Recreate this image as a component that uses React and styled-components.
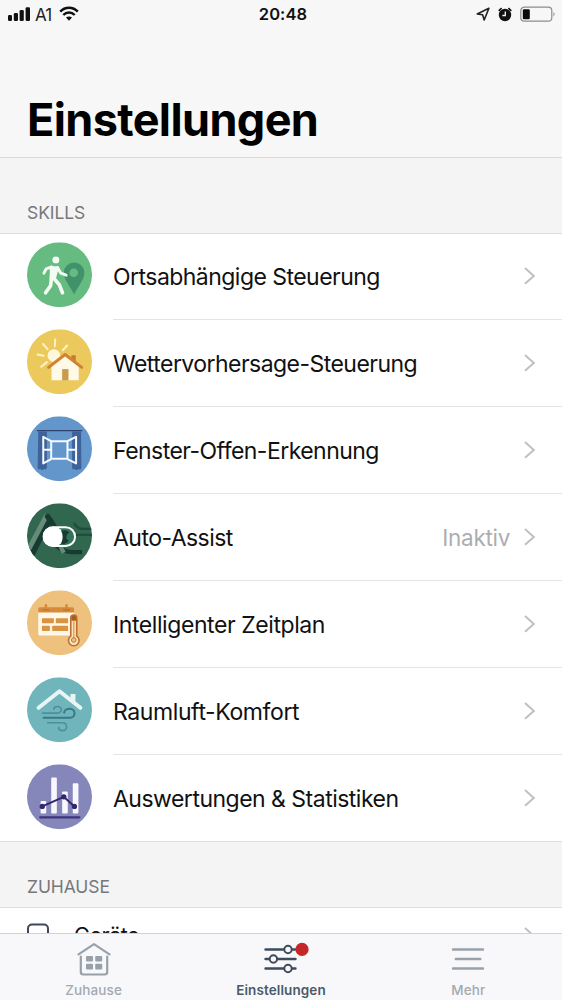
import React from 'react'
import styled, { createGlobalStyle } from 'styled-components'

const GlobalStyle = createGlobalStyle`
  * {
    box-sizing: border-box;
  }
  body {
    margin: 0;
    background: #f4f4f5;
    font-family: Inter, "Liberation Sans", sans-serif;
  }
`

const Screen = styled.div`
  display: flex;
  flex-direction: column;
  width: 562px;
  height: 1000px;
  overflow: hidden;
  background: #f4f4f5;
`
const Header = styled.header`
  flex: none;
  height: 158px;
  background: #f7f7f7;
  border-bottom: 1px solid #d9d9db;
`
const StatusBar = styled.div`
  display: grid;
  grid-template-columns: 1fr auto 1fr;
  align-items: center;
  height: 28px;
  padding: 0 6px 0 7px;
`
const StatusGroup = styled.div`
  display: flex;
  align-items: center;
  gap: ${({ $gap }) => $gap || 0}px;
  justify-content: ${({ $end }) => ($end ? 'flex-end' : 'flex-start')};
`
const Carrier = styled.span`
  margin: 1px 8px 0 4px;
  font-size: 17px;
  letter-spacing: -0.8px;
  color: #222;
`
const Clock = styled.span`
  margin: 0 0 0 3px;
  font-size: 16.5px;
  font-weight: 600;
  letter-spacing: 0.1px;
  color: #111;
`
const Title = styled.h1`
  margin: 65px 0 0 27px;
  font-size: 45px;
  line-height: 54px;
  font-weight: 700;
  letter-spacing: -0.62px;
  color: #000;
`
const Content = styled.main`
  flex: 1;
  min-height: 0;
  overflow: hidden;
`
const SectionLabel = styled.h2`
  display: flex;
  align-items: flex-end;
  height: ${({ $height }) => $height}px;
  margin: 0;
  padding: 0 27px 9px;
  font-size: 17.5px;
  line-height: 22px;
  font-weight: 400;
  letter-spacing: -0.1px;
  color: #77777b;
`
const List = styled.div`
  background: #fff;
  border-bottom: 1px solid #dddddf;
`
const Row = styled.div`
  display: flex;
  height: 87px;
  padding-left: 27px;

  &:first-child {
    border-top: 1px solid #dddddf;
  }
  &:first-child > * {
    margin-top: -1px;
  }
  &:last-child {
    height: 86px;
  }
`
const SkillIcon = styled.svg`
  flex: none;
  width: 65px;
  height: 65px;
  margin-right: 21px;
  transform: translateY(9.3px);
`
const RowBody = styled.div`
  flex: 1;
  display: flex;
  align-items: center;
  border-bottom: ${({ $last }) => ($last ? 'none' : '1px solid #e4e4e6')};
  padding: 0 26px 0 0;
`
const RowLabel = styled.span`
  flex: 1;
  padding-top: 1px;
  font-size: 23px;
  letter-spacing: ${({ $spacing }) => $spacing || -0.54}px;
  color: #111;
`
const RowValue = styled.span`
  margin-right: 14px;
  font-size: 22.5px;
  letter-spacing: -0.3px;
  padding-top: 1px;
  color: #adadb0;
`
const DeviceRow = styled.div`
  display: flex;
  height: 60px;
  padding: 15px 26px 0 27px;
  border-top: 1px solid #dddddf;

  > svg:last-child {
    margin-top: 3px;
  }
`
const DeviceLabel = styled.span`
  flex: 1;
  margin: -3px 0 0 25px;
  font-size: 21.5px;
  line-height: 30px;
  letter-spacing: -0.5px;
  color: #111;
`
const TabBar = styled.nav`
  flex: none;
  display: grid;
  grid-template-columns: repeat(3, 1fr);
  height: 67px;
  background: #f8f8fa;
  border-top: 1px solid #d3d3d6;
`
const Tab = styled.div`
  display: flex;
  flex-direction: column;
  align-items: center;
  padding-top: 6px;
  font-size: 13.5px;
  line-height: 18px;
  font-weight: ${({ $active }) => ($active ? 600 : 500)};
  letter-spacing: 0.1px;
  color: ${({ $active }) => ($active ? '#4a5868' : '#a3a9b0')};

  svg {
    margin-bottom: 5px;
  }
`

const Chevron = () => (
  <svg width="12" height="20" viewBox="0 0 12 20" fill="none" stroke="#c0c0c4" strokeWidth="2">
    <path d="M1 2 L9.8 9.9 L1 17.8" />
  </svg>
)

/* the round icons share one 196 unit canvas, the circle centre is 134,118 */
function Round({ color, id, children }) {
  return (
    <SkillIcon viewBox="36 20 196 196">
      <defs>
        <clipPath id={id}>
          <circle cx="134" cy="118" r="98" />
        </clipPath>
      </defs>
      <circle cx="134" cy="118" r="98" fill={color} />
      <g clipPath={`url(#${id})`}>{children}</g>
    </SkillIcon>
  )
}

const WalkIcon = () => (
  <Round color="#66bb80" id="walk">
    <path d="M178 178 C168 154 147 134 147 112 A31 31 0 0 1 209 112 C209 134 188 154 178 178 Z" fill="#41916a" />
    <circle cx="177" cy="112" r="13" fill="#66bb80" />
    <g fill="none" stroke="#f4fbf2" strokeLinecap="round" strokeLinejoin="round">
      <circle cx="123" cy="73" r="10.5" fill="#f4fbf2" stroke="none" />
      <path d="M109 96 L128 96 L119 130 L108 130 Z" fill="#f4fbf2" strokeWidth="8" />
      <path d="M110 94 L94 100 L87 113" strokeWidth="9" />
      <path d="M128 96 L138 113 L154 119" strokeWidth="9" />
      <path d="M110 128 L107 151 L92 172" strokeWidth="11" />
      <path d="M117 129 L133 147 L143 172" strokeWidth="11" />
    </g>
  </Round>
)

const WeatherIcon = () => (
  <Round color="#ecc95c" id="weather">
    <circle cx="117" cy="99" r="19" fill="#fff7dc" />
    <g stroke="#fff3c4" strokeWidth="6" strokeLinecap="round">
      <path d="M68 96 L86 100" />
      <path d="M84 64 L98 80" />
      <path d="M121 51 L120 71" />
      <path d="M157 69 L144 83" />
      <path d="M79 133 L96 119" />
    </g>
    <path d="M170 98 L183 98 L183 122 L170 112 Z" fill="#c77a2c" />
    <path d="M110 174 L110 130 L151 97 L192 130 L192 174 Z" fill="#fff9e8" />
    <path d="M101 135 L151 96 L201 135" fill="none" stroke="#d08334" strokeWidth="9" strokeLinecap="round" strokeLinejoin="round" />
    <rect x="142" y="140" width="19" height="34" fill="#c99b4a" />
  </Round>
)

const WindowIcon = () => (
  <Round color="#6397cc" id="window">
    <path d="M70 66 L96 66 L96 172 C96 180 90 182 88 178 C84 184 78 182 76 178 C72 182 68 180 68 174 Z" fill="#3e639b" />
    <path d="M172 66 L199 66 L200 174 C200 182 194 182 191 178 C188 184 182 182 180 178 C176 182 172 180 172 174 Z" fill="#3e639b" />
    <path d="M66 63 L203 63" stroke="#2e426c" strokeWidth="4" />
    <g fill="none" stroke="#f5faff" strokeWidth="6" strokeLinejoin="round">
      <rect x="109" y="95" width="49" height="53" />
      <path d="M109 95 L85 82 L85 162 L109 149" />
      <path d="M158 95 L184 82 L184 162 L158 149" />
      <path d="M85 121 L109 121 M158 121 L184 121" />
    </g>
  </Round>
)

const AssistIcon = () => (
  <Round color="#31664f" id="assist">
    <path d="M48 178 L101 72" stroke="#173a32" strokeWidth="19" />
    <path d="M43 155 L93 60" stroke="#648c78" strokeWidth="15" strokeLinecap="round" />
    <path d="M98 60 C103 66 116 84 132 120" fill="none" stroke="#173a32" strokeWidth="16" strokeLinecap="round" />
    <path d="M123 146 C138 160 153 167 170 167 L202 167" fill="none" stroke="#173a32" strokeWidth="13" />
    <path d="M137 151 L147 169" stroke="#648c78" strokeWidth="13" />
    <path d="M178 78 C182 91 192 96 204 97 L232 97 M184 115 L232 115" fill="none" stroke="#204d3f" strokeWidth="7" />
    <rect x="86" y="92" width="95" height="57" rx="28.5" fill="#35735a" stroke="#fff" strokeWidth="6" />
    <rect x="84" y="90" width="62" height="61" rx="30" fill="#fff" />
    <path d="M139 103 C145 114 145 129 139 141 C147 145 157 140 162 132 C151 130 153 112 164 108 C158 101 149 99 139 103 Z" fill="#173a32" />
  </Round>
)

const PlanIcon = () => (
  <Round color="#efc17e" id="plan">
    <path d="M70 84 L178 84 L178 156 L74 156 Q70 156 70 150 Z" fill="#fff8e8" />
    <path d="M75 71 L173 71 Q178 71 178 76 L178 87 L70 87 L70 76 Q70 71 75 71 Z" fill="#d68b3b" />
    <path d="M93 65 L93 79 M155 65 L155 79" stroke="#d68b3b" strokeWidth="8" strokeLinecap="round" />
    <path d="M83 79 L103 79 M145 79 L165 79" stroke="#b96c25" strokeWidth="3" />
    <g fill="#d99443">
      <rect x="81" y="104" width="36" height="15" rx="2" />
      <rect x="123" y="104" width="37" height="15" rx="2" />
      <rect x="81" y="127" width="24" height="16" rx="2" />
      <rect x="112" y="127" width="48" height="16" rx="2" />
    </g>
    <path d="M168 104 A9 9 0 0 1 186 104 L186 158 A16 16 0 1 1 168 158 Z" fill="#ffe8be" stroke="#b97132" strokeWidth="5" />
    <path d="M170 103 A7 7 0 0 1 184 103 L184 112 L170 112 Z" fill="#a75d24" />
    <path d="M177 112 L177 165" stroke="#e3a863" strokeWidth="5" />
    <circle cx="177" cy="170" r="7" fill="#efc17e" stroke="#b97132" strokeWidth="3" />
  </Round>
)

const AirIcon = () => (
  <Round color="#70b5bc" id="air">
    <path d="M167 70 L182 70 L182 96 L167 84 Z" fill="#e9f5f5" />
    <path d="M71 112 L134 62 L197 112" fill="none" stroke="#e9f5f5" strokeWidth="12" strokeLinecap="round" strokeLinejoin="round" />
    <g fill="none" strokeWidth="5" strokeLinecap="round">
      <path d="M83 128 L127 128 C143 128 143 108 128 108 C121 108 117 111 117 116" stroke="#4e909a" />
      <path d="M86 142 L166 142 C184 142 184 115 165 115 C156 115 148 120 148 127" stroke="#397a84" strokeWidth="6" />
      <path d="M98 157 L143 157 C159 157 160 181 143 181 C134 181 131 176 132 171" stroke="#4e909a" />
    </g>
  </Round>
)

const StatsIcon = () => (
  <Round color="#8586ba" id="stats">
    <g fill="#f8f7ff">
      <rect x="77" y="131" width="17" height="37" rx="3" />
      <rect x="109" y="60" width="17" height="108" rx="3" />
      <rect x="142" y="102" width="17" height="66" rx="3" />
      <rect x="174" y="77" width="17" height="91" rx="3" />
    </g>
    <path d="M82 147 L147 118 L179 147" fill="none" stroke="#33276c" strokeWidth="6" />
    <circle cx="82" cy="147" r="8" fill="#33276c" />
    <circle cx="147" cy="118" r="8" fill="#33276c" />
    <circle cx="179" cy="147" r="8" fill="#33276c" />
    <path d="M76 180 L194 180" stroke="#3f347c" strokeWidth="7" strokeLinecap="round" />
  </Round>
)

const SignalIcon = () => (
  <svg width="24" height="16" viewBox="0 0 24 16" fill="#111">
    <rect x="1" y="9" width="4" height="6" rx="1.3" />
    <rect x="6.8" y="7" width="4.2" height="8" rx="1.3" />
    <rect x="12.6" y="4" width="4.2" height="11" rx="1.3" />
    <rect x="18.6" y="1.3" width="4.4" height="13.7" rx="1.3" />
  </svg>
)

const WifiIcon = () => (
  <svg width="20" height="16" viewBox="0 0 20 16" fill="none" stroke="#111" strokeWidth="2.5">
    <path d="M1.2 5.7 C6 0.5 14 0.5 18.8 5.7" />
    <path d="M4.3 9 C7.5 5.7 12.5 5.7 15.7 9" />
    <path d="M7 11.6 C8.7 10 11.3 10 13 11.6 L10 14.7 Z" fill="#111" stroke="none" />
  </svg>
)

const ArrowIcon = () => (
  <svg width="14" height="14" viewBox="0 0 14 14" fill="none" stroke="#222" strokeWidth="1.6" strokeLinejoin="round">
    <path d="M12.9 1.2 L1.2 7 L6.6 7.7 L8.2 13 Z" />
  </svg>
)

const AlarmIcon = () => (
  <svg width="14" height="15" viewBox="0 0 14 15">
    <circle cx="7" cy="8" r="6.2" fill="#111" />
    <path d="M0.7 3.8 L3.6 1.2 M13.3 3.8 L10.4 1.2" stroke="#111" strokeWidth="1.6" />
    <path d="M7.3 4.5 L7.3 8.5 L4.4 8.5" fill="none" stroke="#f7f7f7" strokeWidth="1.3" />
  </svg>
)

const BatteryIcon = () => (
  <svg width="36" height="17" viewBox="0 0 36 17">
    <rect x="0.8" y="1.2" width="31" height="14" rx="3.5" fill="none" stroke="#8d8d8d" strokeWidth="1.2" />
    <rect x="2.8" y="3.2" width="7" height="10" rx="1.2" fill="#0b0b0b" />
    <path d="M33.5 6 Q35.8 8.2 33.5 10.5 Z" fill="#8d8d8d" />
  </svg>
)

const HouseIcon = () => (
  <svg width="34" height="36" viewBox="0 0 34 36" fill="none" stroke="#98a0a9" strokeWidth="2.2" strokeLinecap="round" strokeLinejoin="round">
    <path d="M1.5 14.3 L17 4.2 L32.5 14.3" />
    <path d="M3.8 16.5 L3.8 32 Q3.8 34.5 6.5 34.5 L27.5 34.5 Q30.2 34.5 30.2 32 L30.2 16.5" />
    <g fill="#98a0a9" stroke="none">
      <rect x="9" y="16" width="7" height="5.6" rx="1" />
      <rect x="18.2" y="16" width="7" height="5.6" rx="1" />
      <rect x="9" y="23.8" width="7" height="5.6" rx="1" />
      <rect x="18.2" y="23.8" width="7" height="5.6" rx="1" />
    </g>
  </svg>
)

const SlidersIcon = () => (
  <svg width="34" height="36" viewBox="0 0 34 36" overflow="visible" fill="none" stroke="#3d4b5d" strokeWidth="2.4" strokeLinecap="round">
    <path d="M1.5 9.5 L31 9.5 M1.5 19 L31.5 19 M1.5 28.5 L31.5 28.5" />
    <g fill="#f8f8fa" strokeWidth="2">
      <circle cx="24" cy="9.5" r="3.7" />
      <circle cx="9.4" cy="19" r="3.7" />
      <circle cx="24" cy="28.5" r="3.7" />
    </g>
    <circle cx="38" cy="9.4" r="6.6" fill="#c32728" stroke="none" />
  </svg>
)

const MenuIcon = () => (
  <svg width="34" height="36" viewBox="0 0 34 36" fill="none" stroke="#98a0a9" strokeWidth="2.4" strokeLinecap="round">
    <path d="M2 9.5 L32 9.5 M4.8 19 L29.3 19 M2 28.5 L32 28.5" />
  </svg>
)

const DeviceIcon = () => (
  <svg width="22" height="30" viewBox="0 0 22 30" fill="none" stroke="#3d4858" strokeWidth="2">
    <rect x="1" y="1.5" width="20" height="27" rx="4" />
  </svg>
)

const skills = [
  { label: 'Ortsabhängige Steuerung', Icon: WalkIcon },
  { label: 'Wettervorhersage-Steuerung', Icon: WeatherIcon },
  { label: 'Fenster-Offen-Erkennung', Icon: WindowIcon },
  { label: 'Auto-Assist', Icon: AssistIcon, value: 'Inaktiv' },
  { label: 'Intelligenter Zeitplan', Icon: PlanIcon, spacing: -0.42 },
  { label: 'Raumluft-Komfort', Icon: AirIcon, spacing: -0.4 },
  { label: 'Auswertungen & Statistiken', Icon: StatsIcon, spacing: -0.51 }
]

function App() {
  return (
    <>
      <GlobalStyle />
      <Screen>
        <Header>
          <StatusBar>
            <StatusGroup>
              <SignalIcon />
              <Carrier>A1</Carrier>
              <WifiIcon />
            </StatusGroup>
            <Clock>20:48</Clock>
            <StatusGroup $end $gap={8}>
              <ArrowIcon />
              <AlarmIcon />
              <BatteryIcon />
            </StatusGroup>
          </StatusBar>
          <Title>Einstellungen</Title>
        </Header>
        <Content>
          <SectionLabel $height={75}>SKILLS</SectionLabel>
          <List>
            {skills.map(({ label, Icon, value, spacing }, key) => (
              <Row key={key}>
                <Icon />
                <RowBody $last={key === skills.length - 1}>
                  <RowLabel $spacing={spacing}>{label}</RowLabel>
                  {value && <RowValue>{value}</RowValue>}
                  <Chevron />
                </RowBody>
              </Row>
            ))}
          </List>
          <SectionLabel $height={65}>ZUHAUSE</SectionLabel>
          <List>
            <DeviceRow>
              <DeviceIcon />
              <DeviceLabel>Geräte</DeviceLabel>
              <Chevron />
            </DeviceRow>
          </List>
        </Content>
        <TabBar>
          <Tab>
            <HouseIcon />
            Zuhause
          </Tab>
          <Tab $active>
            <SlidersIcon />
            Einstellungen
          </Tab>
          <Tab>
            <MenuIcon />
            Mehr
          </Tab>
        </TabBar>
      </Screen>
    </>
  )
}

export default App
